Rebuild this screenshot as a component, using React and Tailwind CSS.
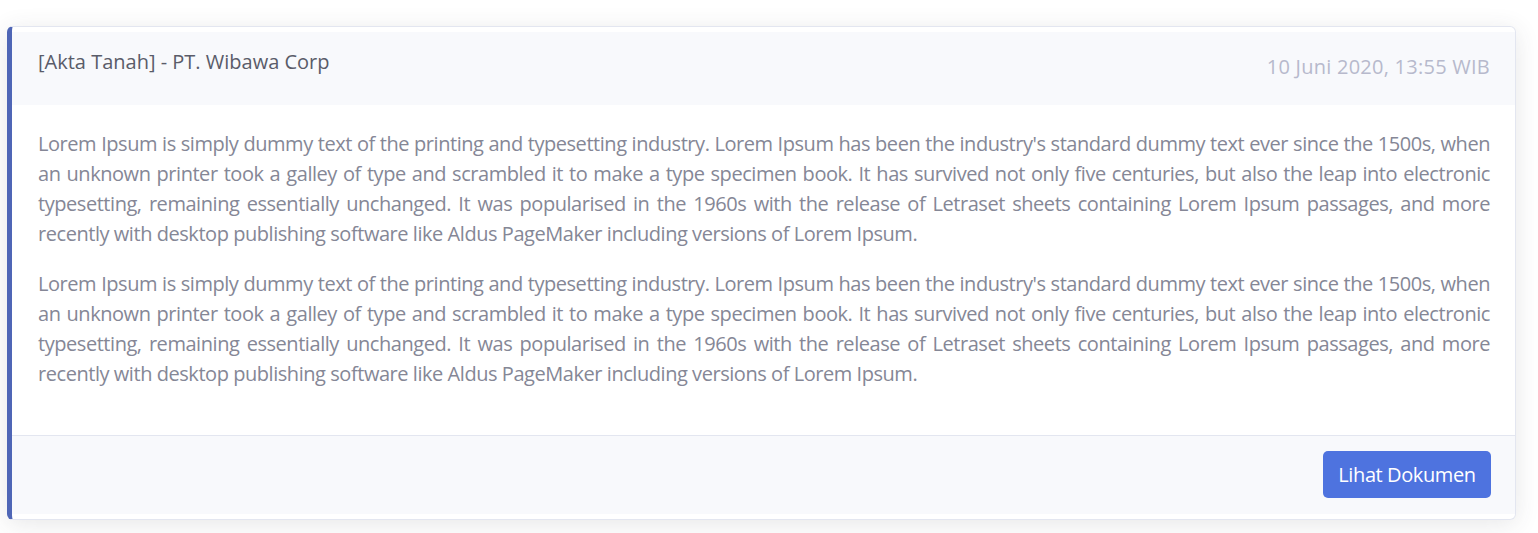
import React from "react";

const lorem =
	"Lorem Ipsum is simply dummy text of the printing and typesetting industry. Lorem Ipsum has been the industry's standard dummy text ever since the 1500s, when an unknown printer took a galley of type and scrambled it to make a type specimen book. It has survived not only five centuries, but also the leap into electronic typesetting, remaining essentially unchanged. It was popularised in the 1960s with the release of Letraset sheets containing Lorem Ipsum passages, and more recently with desktop publishing software like Aldus PageMaker including versions of Lorem Ipsum.";

const DocumentCard = () => {
	return (
		<div className="w-[1509px] rounded-md border border-[#e3e6f0] border-l-[5px] border-l-[#4f66b6] bg-white py-[5px] shadow-[0_4px_24px_0_rgba(58,59,69,0.12)]">
			<div className="flex h-[73px] justify-between bg-[#f8f9fc] pl-[26px] pr-[25px] leading-[30px]">
				<div className="pt-[15px] text-[20px] text-[#5a5c69]">
					[Akta Tanah] - PT. Wibawa Corp
				</div>
				<div className="pt-[20px] text-[20px] tracking-[0.25px] text-[#b7b9cc]">
					10 Juni 2020, 13:55 WIB
				</div>
			</div>

			<div className="pl-[26px] pr-[25px] pt-[24px] pb-[46px] text-[20px] leading-[30px] tracking-[-0.45px] text-[#858796] text-justify">
				<p className="mb-[20px]">{lorem}</p>
				<p>{lorem}</p>
			</div>

			<div className="flex justify-end border-t border-[#e3e6f0] bg-[#f8f9fc] pt-[15px] pb-[16px] pr-[24px]">
				<button className="h-[47px] w-[168px] rounded-[5px] bg-[#4e73df] text-[20px] tracking-[-0.4px] text-white">
					Lihat Dokumen
				</button>
			</div>
		</div>
	);
};

const App = () => {
	return (
		<div
			className="min-h-[533px] bg-white pl-[7px] pt-[26px]"
			style={{ fontFamily: "'Open Sans', 'Noto Sans', sans-serif" }}
		>
			<DocumentCard />
		</div>
	);
};

export default App;
